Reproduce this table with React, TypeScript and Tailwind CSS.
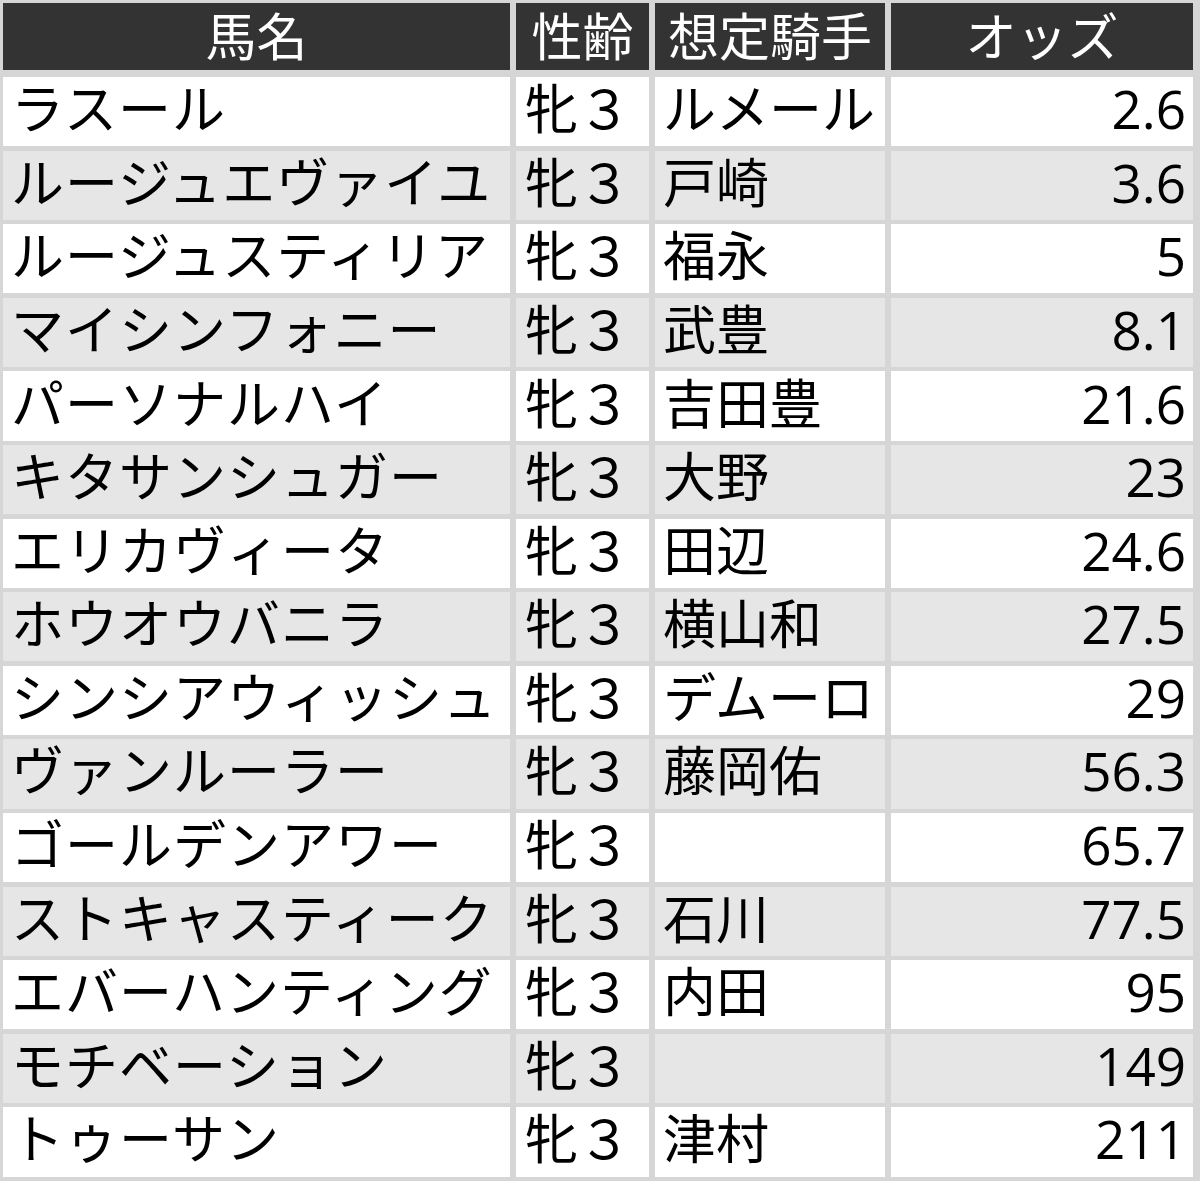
// 想定オッズ table — dark header, zebra rows, light grey cell spacing.

const rows: { name: string; jockey: string; odds: string }[] = [
  { name: "ラスール", jockey: "ルメール", odds: "2.6" },
  { name: "ルージュエヴァイユ", jockey: "戸崎", odds: "3.6" },
  { name: "ルージュスティリア", jockey: "福永", odds: "5" },
  { name: "マイシンフォニー", jockey: "武豊", odds: "8.1" },
  { name: "パーソナルハイ", jockey: "吉田豊", odds: "21.6" },
  { name: "キタサンシュガー", jockey: "大野", odds: "23" },
  { name: "エリカヴィータ", jockey: "田辺", odds: "24.6" },
  { name: "ホウオウバニラ", jockey: "横山和", odds: "27.5" },
  { name: "シンシアウィッシュ", jockey: "デムーロ", odds: "29" },
  { name: "ヴァンルーラー", jockey: "藤岡佑", odds: "56.3" },
  { name: "ゴールデンアワー", jockey: "", odds: "65.7" },
  { name: "ストキャスティーク", jockey: "石川", odds: "77.5" },
  { name: "エバーハンティング", jockey: "内田", odds: "95" },
  { name: "モチベーション", jockey: "", odds: "149" },
  { name: "トゥーサン", jockey: "津村", odds: "211" },
];

const FONT = "font-['Open_Sans','Noto_Sans_CJK_JP',sans-serif]";

function HeaderCell({ children }: { children: React.ReactNode }) {
  return (
    <div className="flex items-center justify-center bg-[#333333] text-[51px] leading-none text-white">
      {children}
    </div>
  );
}

export default function App() {
  return (
    <div className="w-[1200px] bg-white">
      <div className={`${FONT} bg-[#d6d6d6] pt-[3px] pl-[3px] pr-[7px] pb-[4px]`}>
        <div className="mb-[7px] grid h-[67px] grid-cols-[507px_133px_230px_302px] gap-x-[6px]">
          <HeaderCell>馬名</HeaderCell>
          <HeaderCell>性齢</HeaderCell>
          <HeaderCell>想定騎手</HeaderCell>
          <HeaderCell>オッズ</HeaderCell>
        </div>
        <div className="flex flex-col gap-y-[4.3px]">
          {rows.map((r, i) => {
            const bg = i % 2 === 0 ? "bg-white" : "bg-[#e6e6e6]";
            return (
              <div
                key={r.name}
                className="grid h-[69.3px] grid-cols-[507px_133px_230px_302px] gap-x-[6px] text-[53px] leading-none text-black"
              >
                <div className={`${bg} flex items-center whitespace-nowrap pl-[8px] pb-[6px] tracking-[1px]`}>{r.name}</div>
                <div className={`${bg} flex items-center pl-[9px] pb-[6px]`}>牝３</div>
                <div className={`${bg} flex items-center pl-[8px] pb-[6px]`}>{r.jockey}</div>
                <div className={`${bg} flex items-center justify-end pr-[7px] pb-[6px]`}>{r.odds}</div>
              </div>
            );
          })}
        </div>
      </div>
    </div>
  );
}
